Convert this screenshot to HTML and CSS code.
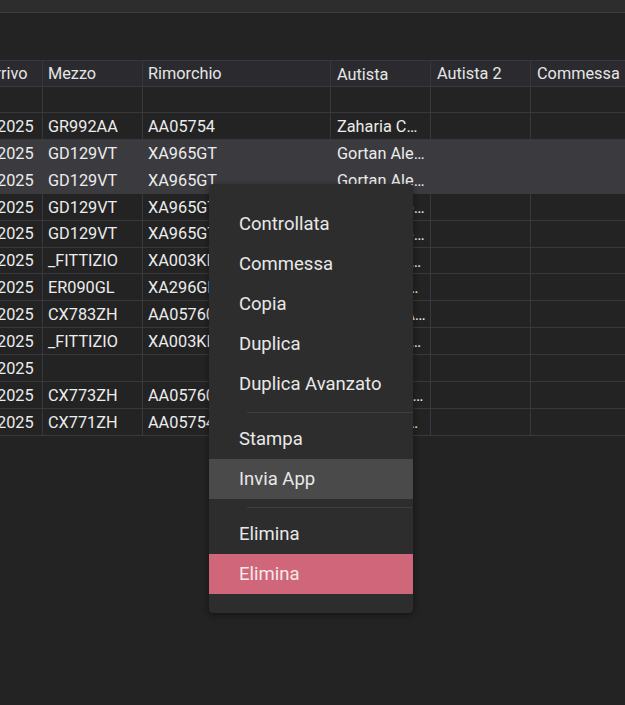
FILE: index.html
```html
<!DOCTYPE html>
<html lang="it">
<head>
<meta charset="utf-8">
<title>Viaggi</title>
<link rel="stylesheet" href="styles.css">
</head>
<body>
<div class="topbar"></div>
<div class="toolbar"></div>
<div class="grid-wrap">
  <div class="grid">
    <div class="row head">
      <div class="cell c1">Data Arrivo</div>
      <div class="cell c2">Mezzo</div>
      <div class="cell c3">Rimorchio</div>
      <div class="cell c4">Autista</div>
      <div class="cell c5">Autista 2</div>
      <div class="cell c6">Commessa</div>
    </div>
    <div class="row empty">
      <div class="cell c1"></div><div class="cell c2"></div><div class="cell c3"></div><div class="cell c4"></div><div class="cell c5"></div><div class="cell c6"></div>
    </div>
    <div class="row">
      <div class="cell c1">10/10/2025</div><div class="cell c2">GR992AA</div><div class="cell c3">AA05754</div><div class="cell c4">Zaharia Constantin</div><div class="cell c5"></div><div class="cell c6"></div>
    </div>
    <div class="row selected">
      <div class="cell c1">10/10/2025</div><div class="cell c2">GD129VT</div><div class="cell c3">XA965GT</div><div class="cell c4">Gortan Alessandro</div><div class="cell c5"></div><div class="cell c6"></div>
    </div>
    <div class="row selected">
      <div class="cell c1">10/10/2025</div><div class="cell c2">GD129VT</div><div class="cell c3">XA965GT</div><div class="cell c4">Gortan Alessandro</div><div class="cell c5"></div><div class="cell c6"></div>
    </div>
    <div class="row">
      <div class="cell c1">10/10/2025</div><div class="cell c2">GD129VT</div><div class="cell c3">XA965GT</div><div class="cell c4">Gortan Alessandro</div><div class="cell c5"></div><div class="cell c6"></div>
    </div>
    <div class="row">
      <div class="cell c1">10/10/2025</div><div class="cell c2">GD129VT</div><div class="cell c3">XA965GT</div><div class="cell c4">Gortan Alessandro</div><div class="cell c5"></div><div class="cell c6"></div>
    </div>
    <div class="row">
      <div class="cell c1">10/10/2025</div><div class="cell c2">_FITTIZIO</div><div class="cell c3">XA003KL</div><div class="cell c4">Marchetti Giuseppe</div><div class="cell c5"></div><div class="cell c6"></div>
    </div>
    <div class="row">
      <div class="cell c1">10/10/2025</div><div class="cell c2">ER090GL</div><div class="cell c3">XA296GL</div><div class="cell c4">Bianchini Roberto</div><div class="cell c5"></div><div class="cell c6"></div>
    </div>
    <div class="row">
      <div class="cell c1">10/10/2025</div><div class="cell c2">CX783ZH</div><div class="cell c3">AA05760</div><div class="cell c4">Popescu Andrei Ion</div><div class="cell c5"></div><div class="cell c6"></div>
    </div>
    <div class="row">
      <div class="cell c1">10/10/2025</div><div class="cell c2">_FITTIZIO</div><div class="cell c3">XA003KL</div><div class="cell c4">Marchetti Giuseppe</div><div class="cell c5"></div><div class="cell c6"></div>
    </div>
    <div class="row">
      <div class="cell c1">10/10/2025</div><div class="cell c2"></div><div class="cell c3"></div><div class="cell c4"></div><div class="cell c5"></div><div class="cell c6"></div>
    </div>
    <div class="row">
      <div class="cell c1">10/10/2025</div><div class="cell c2">CX773ZH</div><div class="cell c3">AA05760</div><div class="cell c4">Rossignoli Francesco</div><div class="cell c5"></div><div class="cell c6"></div>
    </div>
    <div class="row">
      <div class="cell c1">10/10/2025</div><div class="cell c2">CX771ZH</div><div class="cell c3">AA05754</div><div class="cell c4">Ferraro Alessandro</div><div class="cell c5"></div><div class="cell c6"></div>
    </div>
  </div>

  <div class="menu">
    <div class="item">Controllata</div>
    <div class="item">Commessa</div>
    <div class="item">Copia</div>
    <div class="item">Duplica</div>
    <div class="item">Duplica Avanzato</div>
    <div class="sep"></div>
    <div class="item">Stampa</div>
    <div class="item hover">Invia App</div>
    <div class="sep"></div>
    <div class="item">Elimina</div>
    <div class="item danger">Elimina</div>
  </div>
</div>
</body>
</html>
```

FILE: styles.css
```css
* { box-sizing: border-box; }

html, body {
  margin: 0;
  padding: 0;
  background: #232323;
  font-family: Roboto, "Noto Sans", "Liberation Sans", sans-serif;
  color: #ececec;
  overflow: hidden;
}

.topbar {
  height: 13px;
  background: #2d2d2d;
  border-bottom: 1px solid #3c3c3c;
}

.toolbar {
  height: 47px;
  background: #232323;
}

.grid-wrap {
  position: relative;
  overflow: hidden;
  height: 645px;
}

.grid {
  margin-left: -59px;
  width: 800px;
  font-size: 16.3px;
}

.row {
  display: flex;
  height: 26.92px;
  border-bottom: 1px solid #39393d;
}

.row.head {
  height: 27px;
  border-top: 1px solid #39393d;
  background: #2b2b2f;
  color: #e6e6e6;
}

.row.empty {
  height: 26px;
}

.row.selected {
  background: #3b3b3f;
  border-bottom-color: #3b3b3f;
}

.row.selected .cell {
  border-right-color: #3b3b3f;
}

.cell {
  flex: none;
  display: flex;
  align-items: center;
  padding: 2px 6px 0;
  border-right: 1px solid #39393d;
  white-space: nowrap;
  overflow: hidden;
  line-height: 1;
}

.c1 { width: 102px; }
.c2 { width: 100px; padding-left: 5px; }
.c3 { width: 188px; padding-left: 5px; }
.c4 { width: 100px; display: block; text-overflow: ellipsis; line-height: 26px; padding: 1px 4px 0 6px; }
.c5 { width: 100px; }
.c6 { width: 100px; }

.menu {
  position: absolute;
  left: 209px;
  top: 124px;
  width: 204px;
  padding: 20px 0 19px;
  background: #2d2d2d;
  border-radius: 4px;
  box-shadow: 0 2px 6px rgba(0, 0, 0, 0.45);
  font-size: 18.5px;
  color: #e8e8e8;
}

.item {
  height: 40px;
  display: flex;
  align-items: center;
  padding-left: 30px;
}

.item.hover {
  background: #4a4a4a;
}

.item.danger {
  background: #cf6679;
  color: #f6e8eb;
}

.sep {
  height: 1px;
  margin: 8px 0 6px 38px;
  background: #3e3e3e;
}
```
